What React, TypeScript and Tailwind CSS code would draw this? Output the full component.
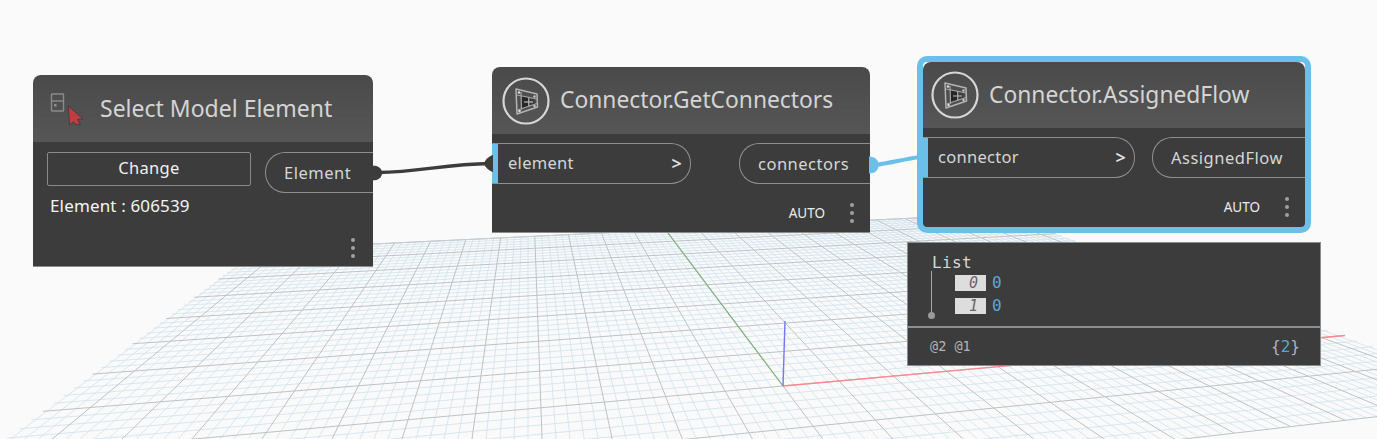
const BLUE = '#6ac0e8';

// ground plane projection, fitted to the reference (u runs along red, v along green)
const g = 0.0148;
const h = 0.106;
function project(u: number, v: number): [number, number] {
  const d = g * u + h * v + 1;
  return [
    (4630 * g * u + 528 * h * v + 783) / d,
    (40 * g * u + 46 * h * v + 386) / d,
  ];
}

const U_MIN = -11.66;
const U_MAX = 11.5;
const V_MIN = -2;
const V_MAX = 8;

function gridLines() {
  const lines: { a: [number, number]; b: [number, number]; major: boolean }[] = [];
  for (let i = Math.ceil(U_MIN * 5); i <= Math.floor(U_MAX * 5); i++) {
    lines.push({ a: project(i / 5, V_MIN), b: project(i / 5, V_MAX), major: i % 5 === 0 });
  }
  for (let i = V_MIN * 5; i <= V_MAX * 5; i++) {
    lines.push({ a: project(U_MIN, i / 5), b: project(U_MAX, i / 5), major: i % 5 === 0 });
  }
  // minor lines go first so the major ones sit on top
  return lines.sort((x, y) => Number(x.major) - Number(y.major));
}

function Ground() {
  const corners = [project(U_MIN, V_MAX), project(U_MAX, V_MAX)];
  const origin = project(0, 0);
  return (
    <svg className="absolute inset-0" width={1377} height={439}>
      {gridLines().map((l, i) => (
        <line
          key={i}
          x1={l.a[0]}
          y1={l.a[1]}
          x2={l.b[0]}
          y2={l.b[1]}
          stroke={l.major ? '#bcc3c7' : '#cfe2ee'}
          strokeWidth={l.major ? 1 : 0.8}
        />
      ))}
      <line x1={corners[0][0]} y1={corners[0][1]} x2={corners[1][0]} y2={corners[1][1]} stroke="#c4cdd2" />
      <line x1={origin[0]} y1={origin[1]} x2={668} y2={233} stroke="#7fb27f" strokeWidth={1.2} />
      <line x1={origin[0]} y1={origin[1]} x2={1345} y2={335.5} stroke="#f58a90" strokeWidth={1.4} />
      <line x1={origin[0]} y1={origin[1]} x2={785} y2={321} stroke="#7476f2" strokeWidth={1.4} />
    </svg>
  );
}

function Wires() {
  return (
    <svg className="absolute inset-0" width={1377} height={439}>
      <path d="M378 172.5 C 420 172, 445 164, 490 163.5" fill="none" stroke="#3c3c3c" strokeWidth={3.5} />
      <path d="M372 165.5 C 379 165.5, 382 169, 382 173 C 382 177, 379 180.5, 372 180.5 Z" fill="#3c3c3c" />
      <path d="M493 155 L 493 172 C 489 171, 485 167, 484 163.5 C 485 160, 489 156, 493 155 Z" fill="#3c3c3c" />
      <path d="M875 165 C 890 163, 905 159, 920 157" fill="none" stroke={BLUE} strokeWidth={4} />
      <path d="M869 156.5 C 875 156.5, 878.5 160, 878.5 165 C 878.5 170, 875 173.5, 869 173.5 Z" fill={BLUE} />
    </svg>
  );
}

function ConnectorIcon() {
  return (
    <svg width={48} height={48} viewBox="0 0 48 48" fill="none">
      <circle cx="24" cy="24" r="22.5" stroke="#d6d6d6" strokeWidth="2.2" />
      <path d="M14 12 L35 17 L35.5 30 L15 37 Z" fill="#4e4e4e" stroke="#b4b4b4" strokeWidth="1.5" strokeLinejoin="round" />
      <path d="M19.5 19 L26 20.5 L26 29.5 L20 31.5 Z" fill="#262626" />
      <path d="M27.5 21 L32.5 22 L32.5 27 L27.5 28.8 Z" fill="#3c3c3c" />
      <path d="M15 18 L35 22 M15.5 33 L35 26.5 M26.7 20.5 L26.7 30 M19 15 L19.5 33" stroke="#a6a6a6" strokeWidth="1.2" />
      <path d="M22 25 L31 25" stroke="#bdbdbd" strokeWidth="1.2" />
      <circle cx="17" cy="15.5" r="1.3" fill="#dcdcdc" />
      <circle cx="32.5" cy="19.5" r="1.2" fill="#c8c8c8" />
      <circle cx="17.5" cy="34" r="1.3" fill="#dcdcdc" />
      <circle cx="32.5" cy="29" r="1.2" fill="#c8c8c8" />
    </svg>
  );
}

function SelectIcon() {
  return (
    <svg width={36} height={36} viewBox="0 0 36 36" fill="none">
      <rect x="1.5" y="1" width="12" height="17" rx="0.5" stroke="#8a8a8a" strokeWidth="1.4" />
      <line x1="1.5" y1="8" x2="13.5" y2="8" stroke="#8a8a8a" strokeWidth="1.4" />
      <rect x="4" y="11" width="2.5" height="2.5" fill="#909090" />
      <path d="M18.5 13 L33 26 L27.5 26.5 L30.5 32 L25 31 L23.5 29 L19.5 32 Z" fill="#c13c40" stroke="#3a3a3a" strokeWidth="0.8" strokeLinejoin="round" />
    </svg>
  );
}

function Dots({ className }: { className?: string }) {
  return (
    <div className={`flex flex-col gap-1 ${className ?? ''}`}>
      <span className="w-1 h-1 rounded-full bg-[#a0a0a0]" />
      <span className="w-1 h-1 rounded-full bg-[#a0a0a0]" />
      <span className="w-1 h-1 rounded-full bg-[#a0a0a0]" />
    </div>
  );
}

function OutPort({ label, width }: { label: string; width: string }) {
  return (
    <div className={`${width} h-[41px] rounded-l-[20px] border border-r-0 border-[#8f8f8f] pl-[18px] pt-[2px] flex items-center text-[16.5px] text-[#d6d6d6] tracking-[0.5px]`}>
      {label}
    </div>
  );
}

interface ConnectorNodeProps {
  title: string;
  input: string;
  output: string;
  inputWidth: string;
  outputWidth: string;
  barWidth: string;
  headerClass: string;
  footerClass: string;
}

function ConnectorBody({ title, input, output, inputWidth, outputWidth, barWidth, headerClass, footerClass }: ConnectorNodeProps) {
  return (
    <>
      <div className={`${headerClass} shrink-0 flex items-center gap-[10px] rounded-t-[8px] bg-gradient-to-b from-[#4a4a4a] to-[#565656]`}>
        <ConnectorIcon />
        <span className="text-[22.8px] text-[#d4d4d4] whitespace-nowrap">{title}</span>
      </div>
      <div className="flex-1 bg-[#3c3c3c] flex flex-col">
        <div className="mt-[9px] flex justify-between">
          <div className={`${inputWidth} h-[41px] rounded-r-[20px] border border-l-0 border-[#8f8f8f] flex items-center text-[16.5px] text-[#d6d6d6] tracking-[0.3px]`}>
            <span className={`${barWidth} h-full bg-[#6ac0e8] shrink-0`} />
            <span className="ml-[10px] flex-1 -mt-[1px]">{input}</span>
            <span className="mr-[8px] font-semibold text-[18px] text-[#e4e4e4]">&gt;</span>
          </div>
          <OutPort label={output} width={outputWidth} />
        </div>
        <div className={`${footerClass} mt-auto flex items-center justify-end gap-[25px] pr-4`}>
          <span className="text-[13.5px] leading-5 text-[#ececec]">AUTO</span>
          <Dots />
        </div>
      </div>
    </>
  );
}

function PreviewPanel() {
  return (
    <div className="absolute left-[907px] top-[242px] w-[414px] h-[124px] bg-[#3c3c3c] border border-[#8c8c8c] flex flex-col font-['DejaVu_Sans_Mono',monospace]">
      <div className="h-[85px] shrink-0 pl-[24px] pt-[10px] flex border-b-2 border-[#8e8e8e] relative">
        <div className="absolute left-[20px] top-[28px] h-[48px] w-[6px] flex flex-col items-center">
          <span className="w-px flex-1 bg-[#a8a8a8]" />
          <span className="w-[7px] h-[7px] rounded-full bg-[#9a9a9a] shrink-0" />
        </div>
        <div className="flex flex-col">
          <span className="text-[16px] leading-[20px] tracking-[0.4px] text-[#d8d8d8]">List</span>
          <div className="flex flex-col gap-[5px] mt-px">
            {['0', '1'].map((n) => (
              <div key={n} className="flex items-center gap-[6px] ml-[23px] h-[18px]">
                <span className="w-[31px] h-4 bg-[#dddddd] text-right pr-[8px] italic text-[15px] leading-4 text-[#666666]">{n}</span>
                <span className="text-[#58a8d6] text-[16px] leading-4">0</span>
              </div>
            ))}
          </div>
        </div>
      </div>
      <div className="flex-1 flex items-center justify-between pl-[22px] pr-[20px]">
        <span className="text-[13.5px] text-[#b4b4b4]">@2 @1</span>
        <span className="text-[16px] text-[#a8b4bc]">
          {'{'}
          <span className="text-[#58a8d6]">2</span>
          {'}'}
        </span>
      </div>
    </div>
  );
}

export default function App() {
  return (
    <div className="relative w-[1377px] h-[439px] overflow-hidden bg-[#fafafa] font-['Noto_Sans',sans-serif]">
      <Ground />

      {/* Select Model Element */}
      <div className="absolute left-[33px] top-[75px] w-[340px] h-[192px] flex flex-col rounded-t-[8px] border-b border-[#8c8c8c]">
        <div className="h-[67px] shrink-0 flex items-center rounded-t-[8px] bg-gradient-to-b from-[#4a4a4a] to-[#565656] relative">
          <div className="absolute left-[17px] top-[18px]">
            <SelectIcon />
          </div>
          <span className="ml-[67px] text-[23px] text-[#d4d4d4]">Select Model Element</span>
        </div>
        <div className="flex-1 bg-[#3c3c3c] flex relative">
          <div className="w-[232px] pl-[14px] pt-[10px] flex flex-col">
            <button className="w-[204px] h-[34px] pb-[2px] border border-[#8a8a8a] rounded-[2px] text-[16.5px] tracking-[0.3px] text-[#f0f0f0]">Change</button>
            <span className="mt-[8px] ml-[3px] text-[17px] tracking-[0.15px] text-[#f4f4f4] leading-[24px]">Element : 606539</span>
          </div>
          <div className="pt-[10px]">
            <OutPort label="Element" width="w-[108px]" />
          </div>
          <Dots className="absolute right-[18px] bottom-[8px]" />
        </div>
      </div>

      {/* Connector.GetConnectors */}
      <div className="absolute left-[492px] top-[67px] w-[378px] h-[166px] flex flex-col rounded-t-[8px] border-b border-[#8c8c8c]">
        <ConnectorBody
          title="Connector.GetConnectors"
          input="element"
          output="connectors"
          inputWidth="w-[199px]"
          outputWidth="w-[131px]"
          barWidth="w-[6px]"
          headerClass="h-[67px] pl-[10px]"
          footerClass="mb-[9px]"
        />
      </div>

      {/* Connector.AssignedFlow, selected */}
      <div className="absolute left-[917px] top-[56px] w-[394px] h-[177px] flex flex-col rounded-[10px] border-[6px] border-[#6ac0e8] overflow-hidden">
        <ConnectorBody
          title="Connector.AssignedFlow"
          input="connector"
          output="AssignedFlow"
          inputWidth="w-[212px]"
          outputWidth="w-[153px]"
          barWidth="w-[5px]"
          headerClass="h-[66px] pl-[8px]"
          footerClass="mb-[10px]"
        />
      </div>

      <Wires />
      <PreviewPanel />
    </div>
  );
}
